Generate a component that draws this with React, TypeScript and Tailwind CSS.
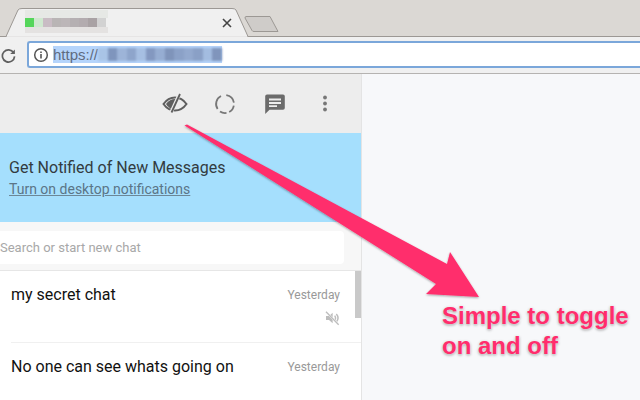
import React from "react";

const tabPixels = ["#55d65b", "#cfe8cf", "#c9bcc4", "#b9b5b5", "#bcb6b8", "#b5b0b2", "#b3acaf", "#a9a2a4", "#d2d2d2"];
const urlPixels = ["#a9c4e6", "#7f95bd", "#9db4d8", "#8ea5cb", "#a6bfe2", "#8398c0", "#96add2", "#7f94ba", "#8ba1c7", "#93a9ce", "#8aa0c6", "#a3bce0", "#8095bc"];

function EyeOff() {
  return (
    <svg width="26" height="26" viewBox="0 0 26 26" fill="none">
      <path d="M1.5 13 C5 8 9 6.5 13 6.5 C17 6.5 21 8 24.5 13 C21 18 17 19.5 13 19.5 C9 19.5 5 18 1.5 13 Z" stroke="#5f5f5f" strokeWidth="2" />
      <path d="M4 13 C6.5 9.5 9.5 8 13 8 L15 8 L9.5 18 C7.5 17 5.5 15.5 4 13 Z" fill="#5f5f5f" />
      <path d="M17.5 3 L9 21.5" stroke="#ededed" strokeWidth="3.4" />
      <path d="M18 3 L9.5 21.500" stroke="#5f5f5f" strokeWidth="1.8" />
    </svg>
  );
}

function Status() {
  return (
    <svg width="24" height="24" viewBox="0 0 24 24" fill="none" stroke="#777" strokeWidth="1.8">
      <path d="M13.3 3.1 A9 9 0 0 1 20.9 10.7" />
      <path d="M20.8 13.6 A9 9 0 0 1 16.2 20" />
      <path d="M13.5 20.9 A9 9 0 0 1 7 19.5" />
      <path d="M4.6 17 A9 9 0 0 1 8 4" />
    </svg>
  );
}

function Chat() {
  return (
    <svg width="24" height="24" viewBox="0 0 24 24" fill="#6b6b6b">
      <path d="M4 2.5 H20 A1.8 1.8 0 0 1 21.8 4.3 V16 A1.8 1.8 0 0 1 20 17.8 H6.5 L2.2 22 V4.3 A1.8 1.8 0 0 1 4 2.5 Z" />
      <path d="M6 6.5 H18 V8.500 H6 Z M6 10 H18 V12 H6 Z M6 13.3 H14 V15 H6 Z" fill="#ededed" />
    </svg>
  );
}

function Kebab() {
  return (
    <svg width="24" height="24" viewBox="0 0 24 24" fill="#777">
      <circle cx="12" cy="5.500" r="1.900" />
      <circle cx="12" cy="11.500" r="1.900" />
      <circle cx="12" cy="17.500" r="1.900" />
    </svg>
  );
}

function Muted() {
  return (
    <svg width="16" height="16" viewBox="0 0 24 24" fill="#bdbdbd">
      <path d="M3 9 H7.5 L13 4 V20 L7.5 15 H3 Z" />
      <path d="M16 8.5 C17.5 10.5 17.5 13.5 16 15.5 M18.5 6 C21.5 9.5 21.5 14.5 18.5 18" fill="none" stroke="#bdbdbd" strokeWidth="2.200" />
      <path d="M3 2.5 L22 22" stroke="#fff" strokeWidth="3" />
      <path d="M3 2.5 L22 22" stroke="#bdbdbd" strokeWidth="2" />
    </svg>
  );
}

function Row({ title, muted }: { title: string; muted?: boolean }) {
  return (
    <div className="h-[72px] flex border-b border-[#f0f0f0] pt-[13px] justify-between">
      <span className="text-[16px] leading-[22px] text-[#111]">{title}</span>
      <div className="flex flex-col items-end pr-[21px] gap-[4px]">
        <span className="text-[12px] leading-[22px] text-[#999]">Yesterday</span>
        {muted && <Muted />}
      </div>
    </div>
  );
}

export default function App() {
  return (
    <div className="relative w-[640px] h-[400px] overflow-hidden bg-[#f7f8fa] flex flex-col font-['Roboto',sans-serif]">
      {/* tab strip */}
      <div className="relative h-[37px] shrink-0 bg-[#dbd8d4] border-b border-[#9c9894]">
        <svg className="absolute left-0 top-0" width="290" height="38" viewBox="0 0 290 38" fill="none">
          <path d="M0 36.500 H6 L18 10 Q19 8.500 22 8.500 H232 Q235 8.500 236 10 L248 36.500" fill="#f0f0f0" stroke="#9c9894" strokeWidth="1" />
          <path d="M7 37 H247" stroke="#f0f0f0" strokeWidth="1.500" />
          <path d="M246 16.5 H270 L278 31.5 H254 Q252.500 31.500 252 30.500 L245 18 Q245 16.500 246 16.500 Z" fill="#cfccc9" stroke="#9c9894" strokeWidth="1" />
        </svg>
        <div className="absolute left-[25px] top-[10px] flex flex-col blur-[0.3px]">
          <div className="h-[8px] w-[83px] bg-[#e6e8e5]" />
          <div className="flex h-[9px]">
            {tabPixels.map((c, i) => (
              <div key={i} className="w-[9px] h-[9px]" style={{ backgroundColor: c }} />
            ))}
          </div>
          <div className="h-[6px] w-[83px] bg-[#e4e2e1]" />
        </div>
        <svg className="absolute left-[222px] top-[18px]" width="10" height="10" viewBox="0 0 10 10" stroke="#444" strokeWidth="1.6">
          <path d="M1 1 L9 9 M9 1 L1 9" />
        </svg>
      </div>

      {/* toolbar */}
      <div className="h-[37px] shrink-0 bg-[#f0f0f0] border-b border-[#b5b3b1] flex items-center">
        <svg className="ml-[1px] w-[15px] h-[15px] shrink-0" viewBox="0 0 16 16" fill="none" stroke="#5f5f5f" strokeWidth="1.8">
          <path d="M13.500 5 A6.500 6.500 0 1 0 14.500 9" />
          <path d="M14.800 1.500 V6.500 H9.800 Z" fill="#5f5f5f" stroke="none" />
        </svg>
        <div className="ml-[11px] flex-1 h-[27px] mb-[1px] bg-white border-2 border-[#7ba7da] border-r-0 rounded-l-[3px] flex items-center pl-[4px]">
          <svg width="16" height="16" viewBox="0 0 16 16" fill="none" className="shrink-0">
            <circle cx="8" cy="8" r="6.300" stroke="#555" strokeWidth="1.500" />
            <path d="M8 7 V11.500 M8 4.500 V6" stroke="#555" strokeWidth="1.600" />
          </svg>
          <div className="ml-[4px] h-[17px] flex items-center bg-[#b5d4fb]">
            <span className="text-[15px] text-[#5f6b80] leading-[17px] font-['Liberation_Sans',sans-serif]">https://</span>
            <div className="flex h-[13px] blur-[1px]">
              {urlPixels.map((c, i) => (
                <div key={i} className="w-[9.500px] h-[13px]" style={{ backgroundColor: c }} />
              ))}
            </div>
          </div>
        </div>
      </div>

      {/* page */}
      <div className="flex flex-1 min-h-0">
        <div className="w-[362px] shrink-0 flex flex-col border-r border-[#e4e4e4] bg-white">
          <div className="h-[59px] shrink-0 bg-[#ededed] flex items-center justify-end pr-[11px]">
            <div className="w-[50px] flex justify-center"><EyeOff /></div>
            <div className="w-[50px] flex justify-center"><Status /></div>
            <div className="w-[50px] flex justify-center"><Chat /></div>
            <div className="w-[50px] flex justify-center"><Kebab /></div>
          </div>
          <div className="h-[89px] shrink-0 bg-[#a5dffd] pl-[9px] pt-[25px]">
            <div className="text-[16px] leading-[20px] text-[#333b40]">Get Notified of New Messages</div>
            <div className="text-[14px] leading-[22px] text-[#5b7587] underline decoration-[#6c8797]">Turn on desktop notifications</div>
          </div>
          <div className="h-[49px] shrink-0 bg-[#f7f7f7] border-b border-[#e6e6e6] pt-[9px] pr-[17px]">
            <div className="h-[33px] bg-white rounded-r-[4px] flex items-center">
              <span className="text-[13px] text-[#a8a8a8]">Search or start new chat</span>
            </div>
          </div>
          <div className="relative flex-1 min-h-0 pl-[11px] overflow-hidden">
            <div className="absolute right-0 top-0 w-[6px] h-[47px] bg-[#c9c9c9]" />
            <Row title="my secret chat" muted />
            <Row title="No one can see whats going on" />
          </div>
        </div>
        <div className="flex-1 bg-[#f7f8fa]" />
      </div>

      {/* annotation arrow */}
      <svg className="absolute left-0 top-0 pointer-events-none" width="640" height="400" viewBox="0 0 640 400">
        <defs>
          <filter id="arrowShadow" x="-10%" y="-10%" width="120%" height="120%">
            <feDropShadow dx="0" dy="1" stdDeviation="1" floodColor="#000" floodOpacity="0.35" />
          </filter>
        </defs>
        <path d="M184.500 125.500 L187 124.500 L447 264 L450 252 L479 297 L426 294 L436 284 Z" fill="#ff2d6c" filter="url(#arrowShadow)" />
      </svg>

      {/* annotation text */}
      <div className="absolute left-[442px] top-[301px] text-[24px] leading-[30px] font-bold text-[#ff2d6c] font-['Liberation_Sans',sans-serif] [text-shadow:0_0_2px_#fff,0_1px_3px_rgba(0,0,0,0.45)]">
        <div>Simple to toggle</div>
        <div>on and off</div>
      </div>
    </div>
  );
}
